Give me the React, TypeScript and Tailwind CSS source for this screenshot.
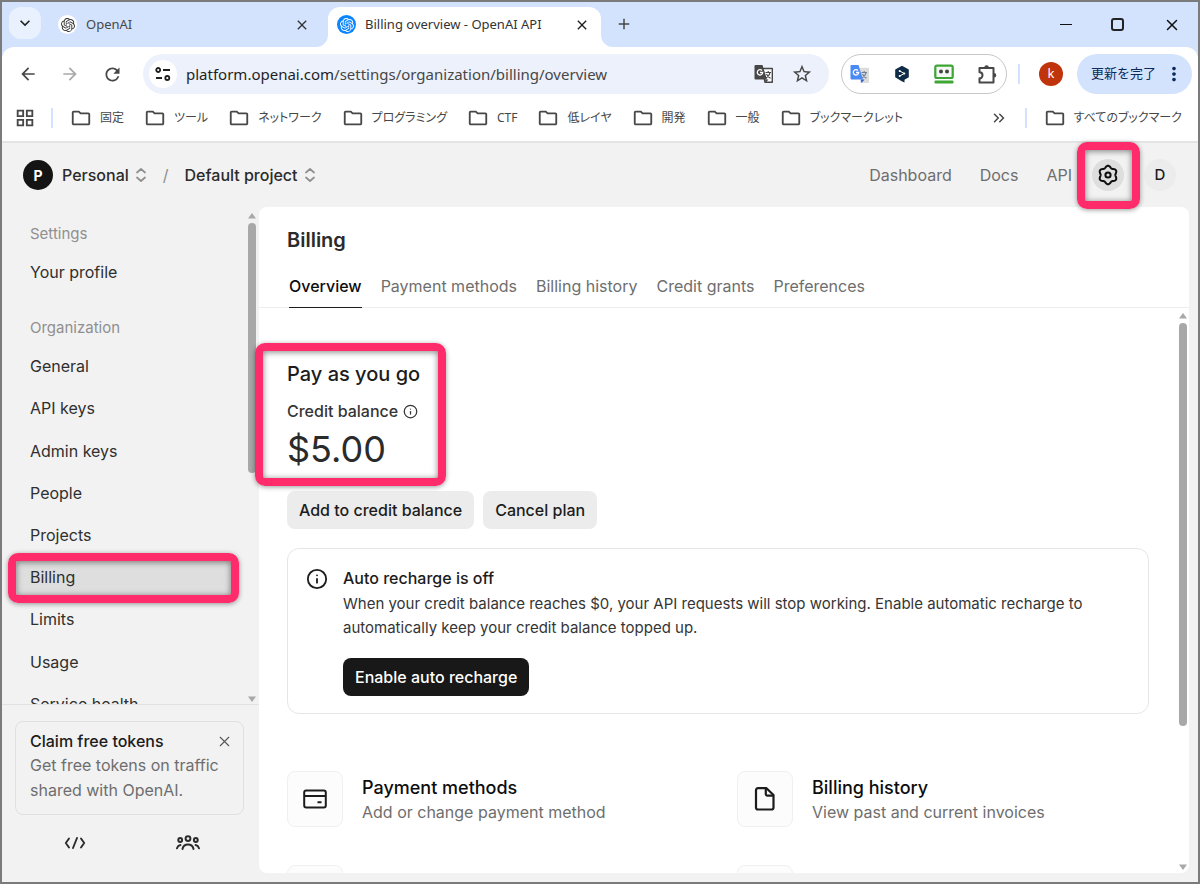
import type { ReactNode } from 'react';
import { SiOpenai } from 'react-icons/si';
import {
  MdArrowBack, MdArrowForward, MdClose, MdAdd, MdRefresh, MdStarBorder,
  MdOutlineFolder, MdOutlineGridView, MdKeyboardArrowDown, MdMoreVert,
} from 'react-icons/md';
import { ChevronsRight, Info, X } from 'lucide-react';

const bookmarks = ['固定', 'ツール', 'ネットワーク', 'プログラミング', 'CTF', '低レイヤ', '開発', '一般', 'ブックマークレット'];
const orgLinks = ['General', 'API keys', 'Admin keys', 'People', 'Projects', 'Billing', 'Limits', 'Usage', 'Service health'];
const tabs = ['Overview', 'Payment methods', 'Billing history', 'Credit grants', 'Preferences'];

function Highlight({ className }: { className: string }) {
  return (
    <div
      aria-hidden="true"
      className={`pointer-events-none absolute z-20 rounded-[10px] border-8 border-[#ff2b6b] shadow-[0_1px_5px_rgba(0,0,0,0.4),inset_0_1px_6px_rgba(0,0,0,0.5)] ${className}`}
    />
  );
}

function TuneIcon() {
  return (
    <svg width="16" height="16" viewBox="0 0 16 16" fill="none" stroke="#1f1f1f" strokeWidth="1.8">
      <circle cx="3.2" cy="4" r="2" />
      <path d="M8 4h7M1 12h6" />
      <circle cx="12.3" cy="12" r="2" />
    </svg>
  );
}

function TranslateIcon({ colored = false }: { colored?: boolean }) {
  return (
    <svg width="20" height="20" viewBox="0 0 20 20" fill="none">
      <path d="M8 4.500h10.300v13.800H11z" fill={colored ? '#dcdcdc' : '#fff'} stroke={colored ? '#dcdcdc' : '#474747'} strokeWidth="1.4" strokeLinejoin="round" />
      <path d="M11.500 8.500h5.500M14.200 7v1.500M16 8.500c-.5 2.500-2 4.500-4 5.500M12.500 10c.8 2 2.200 3.500 4 4.300" stroke={colored ? '#6d7f96' : '#474747'} strokeWidth="1.1" />
      <path d="M11 15.500h3.500L11.500 19z" fill={colored ? '#2a56c6' : '#474747'} />
      <path d="M1.500 1h7l4.500 14.500H1.500a1 1 0 0 1-1-1V2a1 1 0 0 1 1-1z" fill={colored ? '#4a8af4' : '#474747'} />
      <path d="M8 6.500A2.700 2.700 0 1 0 8.700 8.500H6" stroke="#fff" strokeWidth="1.300" />
    </svg>
  );
}

function DeepLIcon() {
  return (
    <svg width="18" height="18" viewBox="0 0 18 18" fill="none">
      <path d="M9 .8 15.800 4.600v7.700L11.500 14.800v2.700L8.700 16.200 2.200 12.300V4.600z" fill="#0f2b46" />
      <path d="M6.700 6 11.300 8.500 6.700 11" stroke="#fff" strokeWidth="1" />
      <g fill="#fff"><circle cx="6.700" cy="6" r="1" /><circle cx="11.300" cy="8.500" r="1" /><circle cx="6.700" cy="11" r="1" /></g>
    </svg>
  );
}

function RobotIcon() {
  return (
    <svg width="20" height="20" viewBox="0 0 20 20" fill="none">
      <rect x="1.300" y="1.600" width="17.400" height="12.400" rx="1.500" fill="#f4faf3" stroke="#3fa535" strokeWidth="2.200" />
      <circle cx="7" cy="7.500" r="2" fill="#444" />
      <circle cx="13" cy="7.500" r="2" fill="#444" />
      <rect x="0.500" y="16.500" width="19" height="3" rx="1" fill="#3fa535" />
    </svg>
  );
}

function PuzzleIcon() {
  return (
    <svg width="21" height="21" viewBox="0 0 21 21" fill="none">
      <path d="M2.500 4h14v14.500h-14v-4.200a3 3 0 0 0 0-6z" stroke="#474747" strokeWidth="2" strokeLinejoin="round" />
      <path d="M7.300 3.500a2.300 2.300 0 0 1 4.600 0zM17 9a2.300 2.300 0 0 1 0 4.600z" fill="#474747" />
    </svg>
  );
}

const gearPoints = Array.from({ length: 120 }, (_, i) => {
  const a = (i * Math.PI) / 60;
  const r = 8.3 + 0.95 * Math.cos(6 * a);
  return `${(12 + r * Math.sin(a)).toFixed(2)},${(12 - r * Math.cos(a)).toFixed(2)}`;
}).join(' ');

function GearIcon() {
  return (
    <svg width="24" height="24" viewBox="0 0 24 24" fill="none" stroke="#0d0d0d" strokeWidth="2" strokeLinejoin="round">
      <polygon points={gearPoints} />
      <circle cx="12" cy="12" r="2.600" />
    </svg>
  );
}

function UpDown() {
  return (
    <svg width="12" height="16" viewBox="0 0 12 16" fill="none" stroke="#8f8f8f" strokeWidth="1.700" strokeLinecap="round" strokeLinejoin="round">
      <path d="M2 5.500 6 2l4 3.500M2 10.500 6 14l4-3.500" />
    </svg>
  );
}

function CardIcon() {
  return (
    <svg width="24" height="24" viewBox="0 0 24 24" fill="none" stroke="#1c1c1c" strokeWidth="2">
      <rect x="1.200" y="3.400" width="21.600" height="17" rx="2" />
      <path d="M1.500 8.900h21M14.500 15.300h4" />
    </svg>
  );
}

function FileIcon() {
  return (
    <svg width="24" height="24" viewBox="0 0 24 24" fill="none" stroke="#1c1c1c" strokeWidth="2.200" strokeLinejoin="round">
      <path d="M5 1.200h8.500L20.500 8v12.500a2 2 0 0 1-2 2H5a2 2 0 0 1-2-2V3.200a2 2 0 0 1 2-2z" />
      <path d="M12.800 1.500V7a1.700 1.700 0 0 0 1.700 1.700h5.700" />
    </svg>
  );
}

function CodeIcon() {
  return (
    <svg width="22" height="14" viewBox="0 0 22 14" fill="none" stroke="#2b2b2b" strokeWidth="1.900" strokeLinecap="round" strokeLinejoin="round">
      <path d="M5 2.500 1.800 7 5 11.500M17 2.500 20.200 7 17 11.500M13 2 9 12" />
    </svg>
  );
}

function PeopleIcon() {
  return (
    <svg width="24" height="16" viewBox="0 0 24 16" fill="none" stroke="#2b2b2b" strokeWidth="2" strokeLinecap="round">
      <circle cx="12" cy="3.600" r="2.400" />
      <circle cx="4.200" cy="5" r="1.900" />
      <circle cx="19.800" cy="5" r="1.900" />
      <path d="M6.500 14a5.600 5.600 0 0 1 11 0M1 13.200a4.500 4.500 0 0 1 3.400-3.100M23 13.200a4.500 4.500 0 0 0-3.400-3.100" />
    </svg>
  );
}

function Scrollbar({ thumb }: { thumb: string }) {
  return (
    <div aria-hidden="true" className="flex w-2 shrink-0 flex-col items-center">
      <svg width="8" height="6" viewBox="0 0 8 6"><path d="M4 0 8 5.500H0z" fill="#a8a8a8" /></svg>
      <div className="mt-1 flex min-h-0 w-full flex-1">
        <div className={`w-full rounded-full bg-[#a8a8a8] ${thumb}`} />
      </div>
      <svg width="8" height="6" viewBox="0 0 8 6"><path d="M4 6 8 .5H0z" fill="#a8a8a8" /></svg>
    </div>
  );
}

function Bookmark({ label }: { label: string }) {
  return (
    <a href="#" className="flex items-center gap-2 whitespace-nowrap">
      <MdOutlineFolder size={22} className="text-[#474747]" />
      {label}
    </a>
  );
}

function Browser() {
  return (
    <div className="shrink-0 bg-[#d3e3fd] font-['Noto_Sans','Noto_Sans_CJK_JP',sans-serif] text-[#474747]">
      <div className="flex h-[45px] items-stretch">
        <button aria-label="Search tabs" className="mt-[5px] ml-[7px] flex size-8 items-center justify-center rounded-xl bg-[#e9f1fe] text-[#1f1f1f]">
          <MdKeyboardArrowDown size={20} />
        </button>
        <div className="flex w-[275px] items-center gap-[9px] pr-[6px] pl-[17px] text-[13px]">
          <span className="flex size-[19px] items-center justify-center rounded-full bg-white text-[#333]"><SiOpenai size={14} /></span>
          <span className="flex-1">OpenAI</span>
          <button aria-label="Close OpenAI" className="text-[#333]"><MdClose size={16} /></button>
        </div>
        <div className="relative ml-[12px] mt-[5px] flex w-[273px] items-center gap-[9px] rounded-t-xl bg-white pr-[11px] pb-[5px] pl-[9px] text-[13px] text-[#333]">
          <svg className="absolute bottom-0 -left-3" width="12" height="12" viewBox="0 0 12 12"><path d="M12 0v12H0A12 12 0 0 0 12 0z" fill="#fff" /></svg>
          <svg className="absolute -right-3 bottom-0" width="12" height="12" viewBox="0 0 12 12"><path d="M0 0v12h12A12 12 0 0 1 0 0z" fill="#fff" /></svg>
          <span className="flex size-[19px] items-center justify-center rounded-full bg-[#0a84ff] text-white"><SiOpenai size={14} /></span>
          <span className="flex-1 whitespace-nowrap">Billing overview - OpenAI API</span>
          <button aria-label="Close Billing overview" className="text-[#1f1f1f]"><MdClose size={16} /></button>
        </div>
        <button aria-label="New tab" className="ml-[14px] pb-0.5"><MdAdd size={18} /></button>
        <div className="ml-auto flex items-center gap-[39px] pr-[17px] text-[#111]">
          <button aria-label="Minimize" className="flex h-4 w-3 items-center"><span className="h-px w-3 bg-[#111]" /></button>
          <button aria-label="Maximize" className="size-[13px] rounded-[3px] border-2 border-[#222]" />
          <button aria-label="Close window"><X size={18} strokeWidth={2} /></button>
        </div>
      </div>

      <div className="rounded-t-xl border-b-2 border-[#e3e5e4] bg-white">
        <div className="flex h-[54px] items-center">
          <div className="flex w-[141px] items-center gap-[22px] pl-4">
            <button aria-label="Back"><MdArrowBack size={20} /></button>
            <button aria-label="Forward" className="text-[#a8a8a8]"><MdArrowForward size={20} /></button>
            <button aria-label="Reload"><MdRefresh size={21} /></button>
          </div>
          <div className="flex h-10 min-w-0 flex-1 items-center rounded-full bg-[#ecf1fb] pr-4 pl-[6px]">
            <button aria-label="Site information" className="flex size-7 shrink-0 items-center justify-center rounded-full bg-white"><TuneIcon /></button>
            <a href="#" className="ml-[9px] flex-1 text-[15px] whitespace-nowrap">
              <span className="text-[#1f1f1f]">platform.openai.com</span>/settings/organization/billing/overview
            </a>
            <button aria-label="Translate"><TranslateIcon /></button>
            <button aria-label="Bookmark this tab" className="ml-[17px]"><MdStarBorder size={22} /></button>
          </div>
          <div className="ml-3 flex h-10 w-[166px] shrink-0 items-center justify-between rounded-full border border-[#c7c7c7] px-[8px]">
            <button aria-label="Google Translate"><TranslateIcon colored /></button>
            <button aria-label="DeepL"><DeepLIcon /></button>
            <button aria-label="Password manager"><RobotIcon /></button>
            <button aria-label="Extensions"><PuzzleIcon /></button>
          </div>
          <div className="ml-[11px] h-5 w-0.5 bg-[#d3e3fd]" />
          <button aria-label="Profile" className="ml-[19px] flex size-6 items-center justify-center rounded-full bg-[#c0340c] text-[13px] text-white">k</button>
          <button className="mr-[6px] ml-[14px] flex h-10 w-[115px] items-center justify-between rounded-full bg-[#d3e3fd] pr-[7px] pl-[14px] text-[13px] whitespace-nowrap text-[#0a2a5c]">
            更新を完了<MdMoreVert size={22} />
          </button>
        </div>
        <nav aria-label="Bookmarks" className="flex h-10 items-center pr-4 pb-[6px] pl-3 text-[12px] [font-feature-settings:'palt']">
          <button aria-label="Apps"><MdOutlineGridView size={22} /></button>
          <div className="mr-[17px] ml-[15px] h-5 w-0.5 bg-[#d3e3fd]" />
          <div className="flex gap-5">
            {bookmarks.map((b) => <Bookmark key={b} label={b} />)}
          </div>
          <button aria-label="More bookmarks" className="ml-auto"><ChevronsRight size={18} /></button>
          <div className="mr-[17px] ml-[17px] h-5 w-0.5 bg-[#d3e3fd]" />
          <Bookmark label="すべてのブックマーク" />
        </nav>
      </div>
    </div>
  );
}

function LinkCard({ icon, title, text }: { icon?: ReactNode; title: string; text: string }) {
  return (
    <a href="#" className="flex h-14 items-center gap-[19px]">
      <span className="flex size-14 shrink-0 items-center justify-center rounded-lg border border-[#f0f0f0] bg-[#fcfcfc]">{icon}</span>
      <span className="flex flex-col">
        <span className="text-[18px] leading-[26px] font-medium text-[#0d0d0d]">{title}</span>
        <span className="text-[16px] leading-[22px] text-[#6e6e6e]">{text}</span>
      </span>
    </a>
  );
}

function Sidebar() {
  return (
    <aside className="flex w-[257px] shrink-0 flex-col">
      <div className="flex min-h-0 flex-1 pr-[3px]">
        <nav aria-label="Settings" className="min-w-0 flex-1 overflow-hidden px-[14px]">
          <h2 className="mt-[15px] h-6 pl-[14px] text-[15px] leading-6 text-[#8f8f8f]">Settings</h2>
          <a href="#" className="mt-2 flex h-9 items-center pl-[14px] text-[#2f2f2f]">Your profile</a>
          <h2 className="mt-[26px] h-6 pl-[14px] text-[15px] leading-6 text-[#8f8f8f]">Organization</h2>
          <ul className="mt-[6px] grid h-[380px] auto-rows-fr text-[#2f2f2f]">
            {orgLinks.map((l) => (
              <li key={l} className="relative flex items-center">
                <a href="#" className={l === 'Billing' ? 'flex h-[38px] flex-1 items-center rounded-lg bg-[#dedede] pb-0.5 pl-[14px]' : 'flex h-[38px] flex-1 items-center pb-0.5 pl-[14px]'}>{l}</a>
                {l === 'Billing' && <Highlight className="-inset-y-1 -right-[5px] -left-2" />}
              </li>
            ))}
          </ul>
        </nav>
        <div className="flex pt-[6px] pb-[2px]"><Scrollbar thumb="h-[250px]" /></div>
      </div>
      <div className="border-t border-[#e2e2e2] pt-4 pr-[15px] pl-[13px]">
        <section className="rounded-lg border border-[#e0e0e0] px-[14px] pt-[7px] pb-[11px]">
          <div className="flex items-center justify-between">
            <h3 className="font-medium leading-6 text-[#1c1c1c]">Claim free tokens</h3>
            <button aria-label="Dismiss" className="-mr-1 text-[#555]"><X size={17} strokeWidth={1.5} /></button>
          </div>
          <p className="leading-[25px] text-[#6e6e6e]">Get free tokens on traffic shared with OpenAI.</p>
        </section>
        <div className="grid h-[67px] grid-cols-2 justify-items-center pt-5 pl-[3px]">
          <button aria-label="API reference" className="flex h-4 items-center"><CodeIcon /></button>
          <button aria-label="Community" className="flex h-4 items-center"><PeopleIcon /></button>
        </div>
      </div>
    </aside>
  );
}

function BillingPanel() {
  return (
    <main className="flex min-w-0 flex-1 flex-col overflow-hidden rounded-lg bg-white">
      <h1 className="mt-[19px] px-7 text-[20px] leading-7 font-semibold text-[#2b2b2b]">Billing</h1>
      <div role="tablist" className="mt-3 flex shrink-0 gap-[19px] border-b border-[#ededed] px-[30px]">
        {tabs.map((t, i) => (
          <button key={t} role="tab" aria-selected={i === 0} className={i === 0 ? '-mb-px h-[42px] border-b border-[#1c1c1c] pb-0.5 font-medium text-[#0d0d0d]' : 'h-[41px] pb-0.5 text-[#6e6e6e]'}>{t}</button>
        ))}
      </div>
      <div className="flex min-h-0 flex-1 pr-[2px]">
        <div className="min-w-0 flex-1 overflow-hidden px-7">
          <h2 className="mt-[52px] text-[20px] leading-7 font-medium text-[#1c1c1c]">Pay as you go</h2>
          <div className="mt-[11px] flex items-center gap-[5px] leading-6 font-medium text-[#353535]">Credit balance <Info size={15} strokeWidth={2} /></div>
          <p className="mt-[6px] text-[36px] leading-10 text-[#2b2b2b]">$5.00</p>
          <div className="mt-[22px] flex gap-[9px]">
            <button className="h-[38px] rounded-lg bg-[#ececec] px-3 font-medium text-[#1c1c1c]">Add to credit balance</button>
            <button className="h-[38px] rounded-lg bg-[#ececec] px-3 font-medium text-[#1c1c1c]">Cancel plan</button>
          </div>
          <section className="mt-[19px] mr-[2px] flex gap-[15px] rounded-xl border border-[#e6e6e6] px-[18px] py-[17px]">
            <Info size={22} strokeWidth={2} className="mt-[2px] shrink-0 text-[#1c1c1c]" />
            <div>
              <h3 className="pb-0.5 leading-6 font-medium text-[#1c1c1c]">Auto recharge is off</h3>
              <p className="text-[15px] leading-6 text-[#353535]">When your credit balance reaches $0, your API requests will stop working. Enable automatic recharge to automatically keep your credit balance topped up.</p>
              <button className="mt-[18px] h-[38px] rounded-lg bg-[#181818] px-3 font-medium text-white">Enable auto recharge</button>
            </div>
          </section>
          <div className="mt-[57px] mr-[2px] grid grid-cols-2 gap-x-[38px] gap-y-[38px]">
            <LinkCard icon={<CardIcon />} title="Payment methods" text="Add or change payment method" />
            <LinkCard icon={<FileIcon />} title="Billing history" text="View past and current invoices" />
            <LinkCard title="Preferences" text="Manage billing information" />
            <LinkCard title="Usage limits" text="Set monthly spend limits" />
          </div>
        </div>
        <div className="flex pt-[5px] pb-[3px]"><Scrollbar thumb="h-[403px]" /></div>
      </div>
    </main>
  );
}

export default function App() {
  return (
    <div className="flex h-screen flex-col overflow-hidden border-2 border-[#7b7b7b] bg-[#f2f2f2]">
      <Browser />
      <div className="flex min-h-0 flex-1 flex-col font-['Inter',sans-serif] text-[16px]">
        <header className="flex h-16 shrink-0 items-center pr-[22px] pl-[21px] font-medium">
          <span className="flex size-[30px] items-center justify-center rounded-full bg-[#141414] text-[14px] font-bold text-white">P</span>
          <button className="ml-[9px] flex items-center gap-[6px] text-[#2b2b2b]">Personal <UpDown /></button>
          <span className="mx-4 font-normal text-[#8f8f8f]">/</span>
          <button className="flex items-center gap-[6px] text-[#2b2b2b]">Default project <UpDown /></button>
          <nav aria-label="Main" className="ml-auto flex items-center gap-7 font-normal text-[#6e6e6e]">
            <a href="#">Dashboard</a><a href="#">Docs</a><a href="#">API</a>
          </nav>
          <div className="relative ml-5">
            <button aria-label="Settings" className="flex size-8 items-center justify-center rounded-full bg-[#dedede]"><GearIcon /></button>
            <Highlight className="-top-[17px] -right-4 -bottom-[18px] -left-[15px]" />
          </div>
          <button className="ml-5 flex size-8 items-center justify-center rounded-full bg-[#ececec] text-[15px] text-[#1c1c1c]">D</button>
        </header>
        <div className="relative flex min-h-0 flex-1 pr-[9px]">
          <Sidebar />
          <div className="flex min-w-0 flex-1 pb-[9px]"><BillingPanel /></div>
          <Highlight className="top-[136px] left-[253px] h-[143px] w-[191px]" />
        </div>
      </div>
    </div>
  );
}
